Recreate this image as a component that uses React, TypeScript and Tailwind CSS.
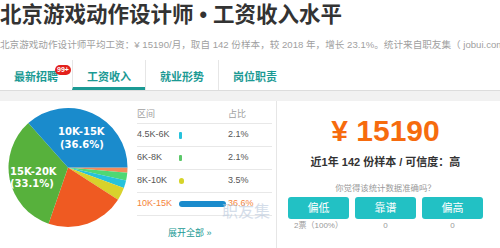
import React from "react";

const slices = [
  { p: 1.4, c: "#f38b5b" },
  { p: 2.1, c: "#4fd874" },
  { p: 2.1, c: "#27c2dc" },
  { p: 3.5, c: "#d8d22c" },
  { p: 21.2, c: "#ef5a22" },
  { p: 33.1, c: "#57b13c" },
  { p: 36.6, c: "#1a8bcc" },
];

const rows = [
  { label: "4.5K-6K", pct: "2.1%", bar: "w-[3px] h-[7px] bg-[#27c2dc] rounded-[1px]" },
  { label: "6K-8K", pct: "2.1%", bar: "w-[3px] h-[6px] bg-[#5cc86a] rounded-[1px]" },
  { label: "8K-10K", pct: "3.5%", bar: "w-[5px] h-[6px] bg-[#d6d42a] rounded-full" },
  { label: "10K-15K", pct: "36.6%", bar: "w-[47px] h-[6px] bg-[#1a8bcc] rounded-full", active: true },
];

const Pie = () => {
  const cx = 68;
  const cy = 66.5;
  const r = 59.5;
  let a = 0;
  const paths = slices.map((s, i) => {
    const start = (a * Math.PI) / 180;
    a += s.p * 3.6;
    const end = (a * Math.PI) / 180;
    const x1 = cx + r * Math.cos(start);
    const y1 = cy + r * Math.sin(start);
    const x2 = cx + r * Math.cos(end);
    const y2 = cy + r * Math.sin(end);
    const large = s.p > 50 ? 1 : 0;
    return (
      <path
        key={i}
        d={`M${cx} ${cy} L${x1} ${y1} A${r} ${r} 0 ${large} 1 ${x2} ${y2} Z`}
        fill={s.c}
      />
    );
  });
  return (
    <svg width="130" height="147" viewBox="0 0 130 147" className="shrink-0">
      {paths}
      <g fill="#fff" fontFamily="'DejaVu Sans', sans-serif" fontWeight="bold" fontSize="10">
        <text x="58" y="34">10K-15K</text>
        <text x="60" y="47">(36.6%)</text>
        <text x="10" y="74">15K-20K</text>
        <text x="10" y="86">(33.1%)</text>
      </g>
    </svg>
  );
};

const tabs = ["最新招聘", "工资收入", "就业形势", "岗位职责"];

export default function App() {
  return (
    <div
      className="w-[500px] h-[248px] overflow-hidden bg-white text-[#333]"
      style={{ fontFamily: "'Liberation Sans', 'Noto Sans CJK SC', sans-serif" }}
    >
      <h1 className="text-[21.5px] leading-[30px] font-bold whitespace-nowrap text-[#333]">
        北京游戏动作设计师 • 工资收入水平
      </h1>
      <p className="mt-[8px] text-[9.6px] leading-[14px] text-[#a0a0a0] whitespace-nowrap">
        北京游戏动作设计师平均工资：¥ 15190/月，取自 142 份样本，较 2018 年，增长 23.1%。统计来自职友集（ jobui.com ）
      </p>

      {/* tabs */}
      <div className="mt-[8px] flex h-[30px] border-b border-[#dcdcdc] box-content">
        {tabs.map((t, i) => (
          <div
            key={t}
            className={`relative flex justify-center pt-[10px] ${i === 0 ? "w-[72px]" : "w-[73px] border-l border-[#e6e6e6]"} ${i === 1 ? "border-b-[3px] border-b-[#1b9a94]" : ""}`}
          >
            <span className="text-[11px] leading-[15px] font-bold text-[#1b9a94]">{t}</span>
            {i === 0 && (
              <span className="absolute left-[55px] top-[5px] w-[16px] h-[10px] rounded-full bg-[#e3201c] text-white text-[7px] leading-[10px] font-bold text-center">
                99+
              </span>
            )}
          </div>
        ))}
      </div>
      <div className="h-[10px] bg-[#f1f1f1]" />

      {/* content */}
      <div className="relative flex h-[147px]">
        <Pie />

        <div className="ml-[7px] w-[135px] shrink-0 text-[9px]">
          <div className="mt-[6px] flex h-[17px] items-center border-b border-[#e8e8e8] text-[#a0a0a0]">
            <span className="w-[91px]">区间</span>
            <span>占比</span>
          </div>
          {rows.map((r) => (
            <div
              key={r.label}
              className={`flex h-[23px] items-center border-b border-[#e8e8e8] ${r.active ? "text-[#f5843a]" : "text-[#555]"}`}
            >
              <span className="w-[42px]">{r.label}</span>
              <span className="w-[49px] flex items-center">
                <span className={r.bar} />
              </span>
              <span className="whitespace-nowrap">{r.pct}</span>
            </div>
          ))}
          <div className="mt-[11px] pl-[31px] text-[9px] leading-[12px] text-[#1b9a94]">展开全部 »</div>
        </div>

        <div className="ml-[4px] flex-1 border-l border-[#e6e6e6] pr-[6px] flex flex-col items-center">
          <div className="mt-[15px] text-[30px] leading-[30px] font-bold text-[#f66b0e] whitespace-nowrap">
            ¥ 15190
          </div>
          <div className="mt-[9px] text-[11px] leading-[14px] font-bold text-[#333] whitespace-nowrap">
            近1年 142 份样本 / 可信度：高
          </div>
          <div className="mt-[13px] text-[8.4px] leading-[12px] text-[#999] whitespace-nowrap">
            你觉得该统计数据准确吗？
          </div>
          <div className="mt-[3px] flex gap-[6px]">
            {[
              ["偏低", "2票（100%）"],
              ["靠谱", "0"],
              ["偏高", "0"],
            ].map(([b, v]) => (
              <div key={b} className="flex w-[61px] flex-col items-center">
                <button className="h-[22px] w-full rounded-[3px] bg-[#22c1c4] text-[11px] leading-[22px] text-white">
                  {b}
                </button>
                <span className="mt-[2px] text-[8px] leading-[10px] text-[#999] whitespace-nowrap">{v}</span>
              </div>
            ))}
          </div>
        </div>

        <span className="absolute left-[222px] top-[103px] text-[16px] leading-[16px] text-[#b9c8dc] opacity-60 pointer-events-none">
          职友集
        </span>
      </div>
    </div>
  );
}
